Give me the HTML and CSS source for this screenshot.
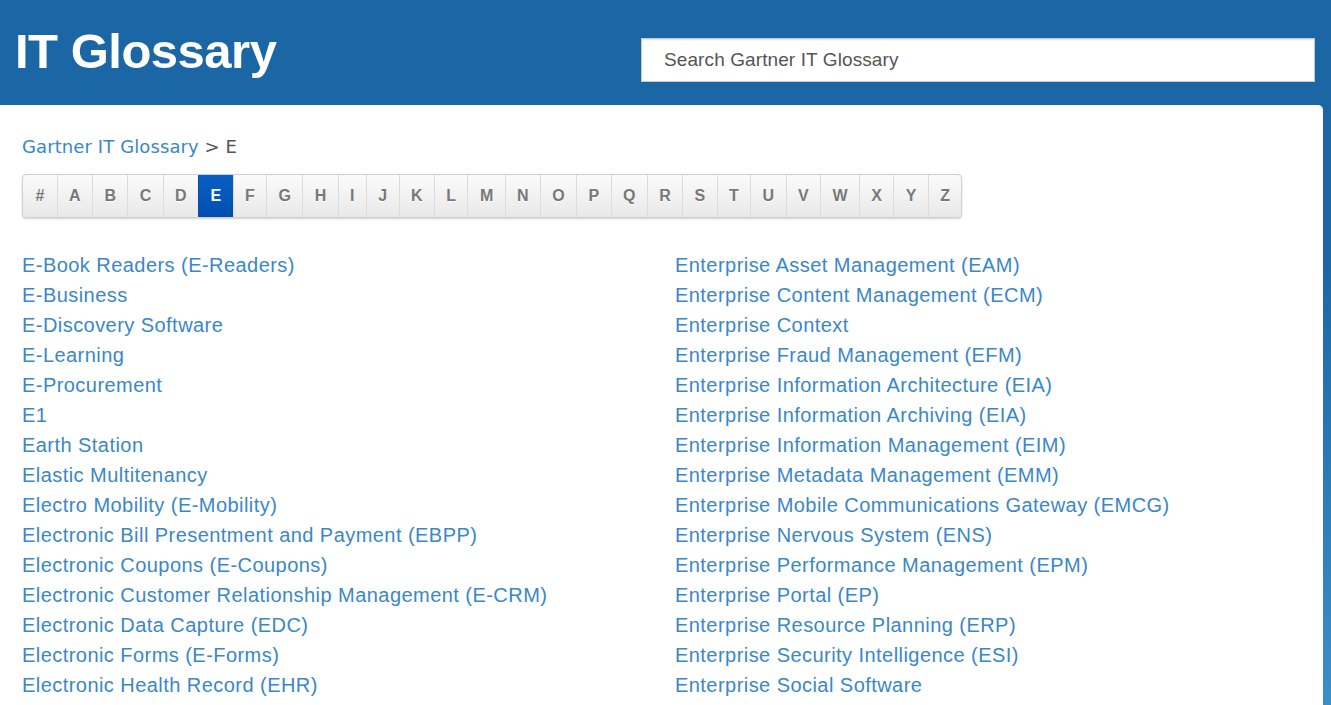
FILE: index.html
```html
<!DOCTYPE html>
<html>
<head>
<meta charset="utf-8">
<link rel="stylesheet" href="styles.css">
<title>IT Glossary</title>
</head>
<body>
<header class="top">
  <h1 class="title">IT Glossary</h1>
  <div class="search">Search Gartner IT Glossary</div>
</header>
<main class="panel">
  <div class="crumb"><a href="#">Gartner IT Glossary</a> &gt; E</div>
  <nav class="letters">
    <a>#</a><a>A</a><a>B</a><a>C</a><a>D</a><a class="on">E</a><a>F</a><a>G</a><a>H</a><a>I</a><a>J</a><a>K</a><a>L</a><a>M</a><a>N</a><a>O</a><a>P</a><a>Q</a><a>R</a><a>S</a><a>T</a><a>U</a><a>V</a><a>W</a><a>X</a><a>Y</a><a>Z</a>
  </nav>
  <div class="cols">
    <ul class="list">
      <li><a href="#">E-Book Readers (E-Readers)</a></li>
      <li><a href="#">E-Business</a></li>
      <li><a href="#">E-Discovery Software</a></li>
      <li><a href="#">E-Learning</a></li>
      <li><a href="#">E-Procurement</a></li>
      <li><a href="#">E1</a></li>
      <li><a href="#">Earth Station</a></li>
      <li><a href="#">Elastic Multitenancy</a></li>
      <li><a href="#">Electro Mobility (E-Mobility)</a></li>
      <li><a href="#">Electronic Bill Presentment and Payment (EBPP)</a></li>
      <li><a href="#">Electronic Coupons (E-Coupons)</a></li>
      <li><a href="#">Electronic Customer Relationship Management (E-CRM)</a></li>
      <li><a href="#">Electronic Data Capture (EDC)</a></li>
      <li><a href="#">Electronic Forms (E-Forms)</a></li>
      <li><a href="#">Electronic Health Record (EHR)</a></li>
    </ul>
    <ul class="list">
      <li><a href="#">Enterprise Asset Management (EAM)</a></li>
      <li><a href="#">Enterprise Content Management (ECM)</a></li>
      <li><a href="#">Enterprise Context</a></li>
      <li><a href="#">Enterprise Fraud Management (EFM)</a></li>
      <li><a href="#">Enterprise Information Architecture (EIA)</a></li>
      <li><a href="#">Enterprise Information Archiving (EIA)</a></li>
      <li><a href="#">Enterprise Information Management (EIM)</a></li>
      <li><a href="#">Enterprise Metadata Management (EMM)</a></li>
      <li><a href="#">Enterprise Mobile Communications Gateway (EMCG)</a></li>
      <li><a href="#">Enterprise Nervous System (ENS)</a></li>
      <li><a href="#">Enterprise Performance Management (EPM)</a></li>
      <li><a href="#">Enterprise Portal (EP)</a></li>
      <li><a href="#">Enterprise Resource Planning (ERP)</a></li>
      <li><a href="#">Enterprise Security Intelligence (ESI)</a></li>
      <li><a href="#">Enterprise Social Software</a></li>
    </ul>
  </div>
</main>
</body>
</html>
```

FILE: styles.css
```css
* { box-sizing: border-box; }
html, body { height: 100%; }
body {
  margin: 0;
  font-family: "Liberation Sans", Arial, sans-serif;
  background: linear-gradient(to bottom, #1b67a5 0px, #1b67a5 260px, #3b8fc9 705px);
  overflow: hidden;
}
.top {
  height: 105px;
  display: flex;
  align-items: flex-start;
  justify-content: space-between;
  padding: 0 16px 0 15px;
}
.title {
  margin: 23px 0 0 0;
  color: #fff;
  font-size: 49px;
  font-weight: bold;
  letter-spacing: -0.5px;
  line-height: 56px;
}
.search {
  margin-top: 38px;
  width: 674px;
  height: 44px;
  background: #fff;
  border: 1px solid #c9c9c9;
  box-shadow: inset 0 1px 2px rgba(0,0,0,0.12);
  color: #555;
  font-size: 19px;
  line-height: 42px;
  padding-left: 22px;
  letter-spacing: 0.1px;
}
.panel {
  width: 1323px;
  height: 600px;
  background: #fff;
  border-radius: 0 5px 0 0;
  padding: 30px 0 0 22px;
}
.crumb {
  font-family: "DejaVu Sans", Verdana, sans-serif;
  font-size: 18px;
  color: #555;
  line-height: 24px;
  letter-spacing: 0.1px;
}
.crumb a { color: #3a87c9; text-decoration: none; }
.letters {
  margin-top: 15px;
  display: inline-flex;
  height: 44px;
  border: 1px solid #cfcfcf;
  border-radius: 4px;
  box-shadow: 0 1px 2px rgba(0,0,0,0.18);
  background: linear-gradient(#fbfbfb, #e8e8e8);
  overflow: hidden;
}
.letters a {
  display: flex;
  align-items: center;
  justify-content: center;
  padding: 0 11.4px;
  font-size: 16px;
  font-weight: bold;
  color: #787878;
  border-left: 1px solid #dcdcdc;
  text-shadow: 0 1px 0 #fff;
}
.letters a:first-child { border-left: 0; padding: 0 12.4px; }
.letters a.on {
  background: linear-gradient(#0a5fc4, #004fb0);
  color: #fff;
  text-shadow: none;
  border-left-color: #0a4fa0;
}
.cols {
  display: grid;
  grid-template-columns: 653px 1fr;
  margin-top: 32px;
}
.list {
  list-style: none;
  margin: 0;
  padding: 0;
}
.list li {
  height: 30px;
  line-height: 30px;
  font-size: 20px;
  letter-spacing: 0.45px;
}
.list a {
  color: #3a87c9;
  text-decoration: none;
}
```
